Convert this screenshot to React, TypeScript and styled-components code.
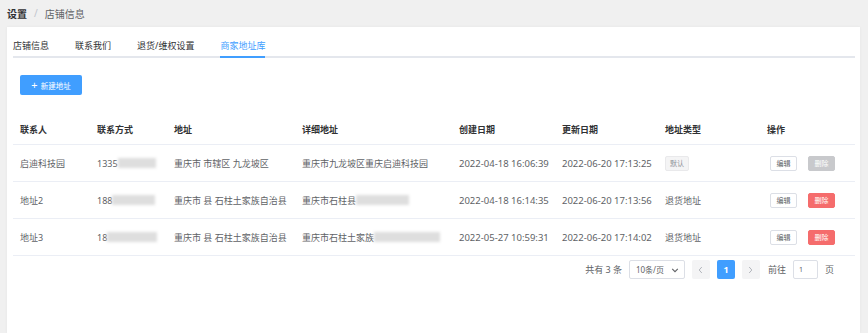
import React from "react";
import styled, { createGlobalStyle } from "styled-components";

const GlobalStyle = createGlobalStyle`
  html, body {
    margin: 0;
    padding: 0;
    background: #f0f0f0;
    font-family: "Noto Sans", "Noto Sans CJK SC", sans-serif;
    color: #606266;
  }
  #root {
    height: 333px;
    overflow: hidden;
  }
`;

type Row = {
  name: string;
  phone: string;
  phoneBlur: number;
  region: string;
  detail: string;
  detailBlur: number;
  created: string;
  updated: string;
  isDefault: boolean;
};

const rows: Row[] = [
  {
    name: "启迪科技园",
    phone: "1335",
    phoneBlur: 38,
    region: "重庆市 市辖区 九龙坡区",
    detail: "重庆市九龙坡区重庆启迪科技园",
    detailBlur: 0,
    created: "2022-04-18 16:06:39",
    updated: "2022-06-20 17:13:25",
    isDefault: true,
  },
  {
    name: "地址2",
    phone: "188",
    phoneBlur: 43,
    region: "重庆市 县 石柱土家族自治县",
    detail: "重庆市石柱县",
    detailBlur: 53,
    created: "2022-04-18 16:14:35",
    updated: "2022-06-20 17:13:56",
    isDefault: false,
  },
  {
    name: "地址3",
    phone: "18",
    phoneBlur: 50,
    region: "重庆市 县 石柱土家族自治县",
    detail: "重庆市石柱土家族",
    detailBlur: 66,
    created: "2022-05-27 10:59:31",
    updated: "2022-06-20 17:14:02",
    isDefault: false,
  },
];

const columns = [
  { title: "联系人", width: 77 },
  { title: "联系方式", width: 77 },
  { title: "地址", width: 128 },
  { title: "详细地址", width: 157 },
  { title: "创建日期", width: 103 },
  { title: "更新日期", width: 103 },
  { title: "地址类型", width: 102 },
  { title: "操作", width: 95 },
];

const gridCols = columns.map((c) => `${c.width}px`).join(" ");

export default function App() {
  return (
    <>
      <GlobalStyle />
      <Page>
        <Breadcrumb>
          <strong>设置</strong>
          <span className="sep">/</span>
          <span>店铺信息</span>
        </Breadcrumb>

        <Card>
          <Tabs>
            <Tab>店铺信息</Tab>
            <Tab>联系我们</Tab>
            <Tab>退货/维权设置</Tab>
            <Tab $active>商家地址库</Tab>
          </Tabs>

          <Toolbar>
            <PrimaryButton>
              <span className="plus">+</span>
              新建地址
            </PrimaryButton>
          </Toolbar>

          <Table>
            <HeadRow>
              {columns.map((c) => (
                <HeadCell key={c.title}>{c.title}</HeadCell>
              ))}
            </HeadRow>
            {rows.map((r) => (
              <BodyRow key={r.name}>
                <Cell>{r.name}</Cell>
                <Cell>
                  {r.phone}
                  <Blur $w={r.phoneBlur} />
                </Cell>
                <Cell>{r.region}</Cell>
                <Cell>
                  {r.detail}
                  {r.detailBlur > 0 && <Blur $w={r.detailBlur} />}
                </Cell>
                <Cell $num>{r.created}</Cell>
                <Cell $num>{r.updated}</Cell>
                <Cell>{r.isDefault ? <Tag>默认</Tag> : "退货地址"}</Cell>
                <Cell>
                  <Actions>
                    <SmallButton>编辑</SmallButton>
                    <SmallButton $danger $disabled={r.isDefault}>
                      删除
                    </SmallButton>
                  </Actions>
                </Cell>
              </BodyRow>
            ))}
          </Table>

          <Pager>
            <span>共有 3 条</span>
            <SizeSelect>
              <span>10条/页</span>
              <svg width="8" height="8" viewBox="0 0 10 10">
                <path d="M1.5 3.5 L5 7 L8.5 3.5" fill="none" stroke="#606266" strokeWidth="1.4" />
              </svg>
            </SizeSelect>
            <PageBtn>
              <svg width="7" height="8" viewBox="0 0 10 12">
                <path d="M7 1.5 L3 6 L7 10.5" fill="none" stroke="#a8abb2" strokeWidth="1.3" />
              </svg>
            </PageBtn>
            <PageBtn $active>1</PageBtn>
            <PageBtn>
              <svg width="7" height="8" viewBox="0 0 10 12">
                <path d="M3 1.5 L7 6 L3 10.5" fill="none" stroke="#a8abb2" strokeWidth="1.3" />
              </svg>
            </PageBtn>
            <span className="goto">前往</span>
            <JumpInput>1</JumpInput>
            <span>页</span>
          </Pager>
        </Card>
      </Page>
    </>
  );
}

const Page = styled.div`
  display: flex;
  flex-direction: column;
  height: 333px;
`;

const Breadcrumb = styled.div`
  height: 27px;
  display: flex;
  align-items: center;
  padding-left: 7px;
  padding-bottom: 1px;
  box-sizing: border-box;
  font-size: 10px;
  color: #606266;

  strong {
    color: #303133;
    font-weight: 700;
  }
  .sep {
    color: #c0c4cc;
    margin: 0 7px;
  }
`;

const Card = styled.div`
  flex: 1;
  background: #fff;
  margin: 0 8px 0 7px;
  padding: 8px 5px 0 6px;
  box-shadow: 0 0 3px rgba(0, 0, 0, 0.05);
`;

const Tabs = styled.div`
  display: flex;
  height: 23px;
  border-bottom: 2px solid #e4e7ed;
  box-sizing: border-box;
`;

const Tab = styled.div<{ $active?: boolean }>`
  position: relative;
  padding: 0 13px;
  font-size: 9px;
  line-height: 21px;
  color: ${({ $active }) => ($active ? "#409eff" : "#303133")};

  &:first-child {
    padding-left: 0;
  }

  &::after {
    content: "";
    display: ${({ $active }) => ($active ? "block" : "none")};
    position: absolute;
    left: 13px;
    right: 13px;
    bottom: -2px;
    height: 2px;
    background: #409eff;
  }
`;

const Toolbar = styled.div`
  display: flex;
  padding: 17px 0 0 7px;
  height: 20px;
`;

const PrimaryButton = styled.button`
  display: flex;
  align-items: center;
  justify-content: center;
  gap: 3px;
  width: 62px;
  height: 20px;
  padding: 0;
  border: none;
  border-radius: 2px;
  background: #409eff;
  color: #fff;
  font-family: inherit;
  font-size: 7.5px;

  .plus {
    font-size: 11px;
    line-height: 1;
    margin-top: -1px;
  }
`;

const Table = styled.div`
  margin-top: 19px;
  display: flex;
  flex-direction: column;
`;

const HeadRow = styled.div`
  display: grid;
  grid-template-columns: ${gridCols};
  height: 31px;
  border-bottom: 1px solid #ebeef5;
  box-sizing: border-box;
`;

const HeadCell = styled.div`
  display: flex;
  align-items: center;
  padding-left: 7px;
  font-size: 9px;
  font-weight: 700;
  color: #303133;
`;

const BodyRow = styled.div`
  display: grid;
  grid-template-columns: ${gridCols};
  height: 37px;
  border-bottom: 1px solid #ebeef5;
  box-sizing: border-box;
`;

const Cell = styled.div<{ $num?: boolean }>`
  display: flex;
  align-items: center;
  padding-left: 7px;
  font-size: ${({ $num }) => ($num ? "9.5px" : "9px")};
  color: #606266;
  white-space: nowrap;
`;

const Blur = styled.span<{ $w: number }>`
  display: inline-block;
  width: ${({ $w }) => $w}px;
  height: 10px;
  background: #dedede;
  filter: blur(1.5px);
`;

const Tag = styled.span`
  display: inline-flex;
  align-items: center;
  padding: 0 4px;
  height: 15px;
  font-size: 7px;
  color: #909399;
  background: #f4f4f5;
  border: 1px solid #e9e9eb;
  border-radius: 2px;
  box-sizing: border-box;
`;

const Actions = styled.div`
  display: flex;
  gap: 11px;
  padding-left: 3px;
`;

const SmallButton = styled.button<{ $danger?: boolean; $disabled?: boolean }>`
  width: 27px;
  height: 15px;
  padding: 0;
  font-family: inherit;
  font-size: 7px;
  border-radius: 2px;
  box-sizing: border-box;
  border: 1px solid
    ${({ $danger, $disabled }) => ($disabled ? "#c8c9cc" : $danger ? "#f56c6c" : "#dcdfe6")};
  background: ${({ $danger, $disabled }) => ($disabled ? "#c8c9cc" : $danger ? "#f56c6c" : "#fff")};
  color: ${({ $danger }) => ($danger ? "#fff" : "#606266")};
`;

const Pager = styled.div`
  display: flex;
  justify-content: flex-end;
  align-items: center;
  gap: 7px;
  padding: 4px 21px 0 0;
  font-size: 9px;
  color: #606266;

  .goto {
    margin-left: 1px;
  }
`;

const SizeSelect = styled.div`
  display: flex;
  align-items: center;
  justify-content: space-between;
  width: 56px;
  height: 19px;
  padding: 0 5px 0 6px;
  border: 1px solid #dcdfe6;
  border-radius: 2px;
  box-sizing: border-box;
  font-size: 8px;
`;

const PageBtn = styled.div<{ $active?: boolean }>`
  display: flex;
  align-items: center;
  justify-content: center;
  width: 18px;
  height: 19px;
  border-radius: 2px;
  font-size: 9px;
  font-weight: 700;
  background: ${({ $active }) => ($active ? "#409eff" : "#f4f4f5")};
  color: ${({ $active }) => ($active ? "#fff" : "#606266")};
`;

const JumpInput = styled.div`
  display: flex;
  align-items: center;
  width: 25px;
  height: 19px;
  padding-left: 5px;
  border: 1px solid #dcdfe6;
  border-radius: 2px;
  box-sizing: border-box;
  font-size: 7px;
`;
